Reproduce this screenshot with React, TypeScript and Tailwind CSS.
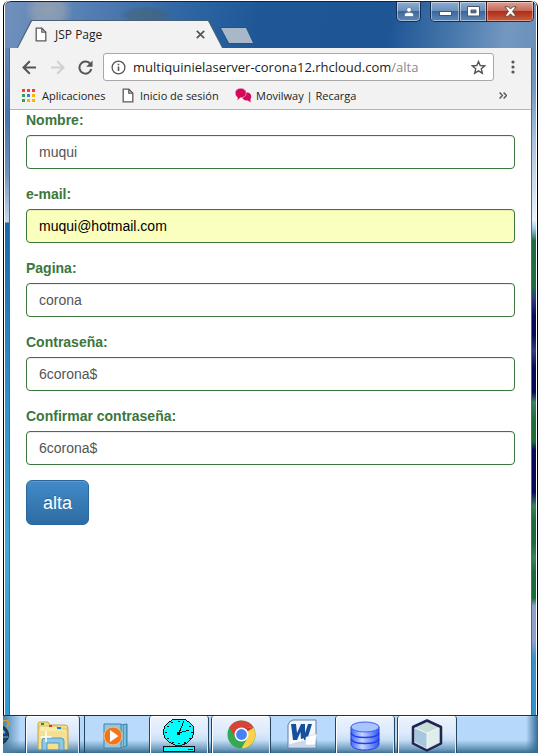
import { useState, type ReactNode } from "react";

const fields = [
  { id: "nombre", label: "Nombre:", type: "text", value: "muqui" },
  { id: "email", label: "e-mail:", type: "email", value: "muqui@hotmail.com", filled: true },
  { id: "pagina", label: "Pagina:", type: "text", value: "corona" },
  { id: "clave", label: "Contraseña:", type: "text", value: "6corona$" },
  { id: "confirmar", label: "Confirmar contraseña:", type: "text", value: "6corona$" },
];

function PageIcon() {
  return (
    <svg width="12" height="15" viewBox="0 0 12 15" fill="#fff" stroke="#5a5a5a" strokeWidth="1.3">
      <path d="M1.2 1.2H6.8L10.8 5.2V13.8H1.2Z" />
      <path d="M6.8 1.2V5.2H10.8" fill="none" />
    </svg>
  );
}

function TitleBar() {
  const glass =
    "flex items-center justify-center shadow-[inset_0_0_0_1px_rgba(255,255,255,0.45)] bg-[linear-gradient(#8fadcf_0%,#6c91bc_45%,#3a689f_50%,#5d87b6_100%)]";
  return (
    <header className="flex h-[47px] shrink-0 items-end rounded-t-md border-t border-[#1a2430] bg-[radial-gradient(ellipse_24px_24px_at_44px_8px,rgba(165,170,175,.7)_0%,rgba(165,170,175,.5)_60%,transparent_100%),radial-gradient(ellipse_28px_9px_at_141px_13px,rgba(75,100,105,.6)_0%,rgba(65,95,115,.45)_65%,transparent_100%),linear-gradient(100deg,#7191bd_0%,#5a82b5_13%,#2e65a3_34%,#1f5696_48%,#1d5595_72%,#4777ab_84%,#7398c0_94%,#6a91bc_100%)]">
      <div className="ml-3 flex h-[28px] w-[206px] bg-[#4a6078] [clip-path:polygon(0_100%,14px_0,192px_0,100%_100%)]">
        <div className="mt-px flex w-full items-center bg-[#f2f2f2] pr-[18px] pl-[18px] [clip-path:polygon(1px_100%,15px_0,191px_0,205px_100%)]">
          <PageIcon />
          <span className="ml-2 flex-1 text-[12px] leading-4 text-[#222]">JSP Page</span>
          <button aria-label="Cerrar pestaña">
            <svg width="9" height="9" viewBox="0 0 9 9" stroke="#555" strokeWidth="1.7">
              <path d="M.8.8 8.2 8.2M8.2.8.8 8.2" />
            </svg>
          </button>
        </div>
      </div>
      <button
        aria-label="Nueva pestaña"
        className="-ml-[3px] mb-1 h-[17px] w-[34px] bg-[#29517f] [clip-path:polygon(0_0,26px_0,100%_100%,8px_100%)]"
      >
        <span className="mx-px block h-[15px] bg-[#a9b8c9] [clip-path:polygon(0_0,25px_0,100%_100%,8px_100%)]" />
      </button>
      <div className="mr-0.5 ml-auto flex gap-[9px] self-start">
        <button
          aria-label="Usuario"
          className={`${glass} h-[20px] w-[25px] rounded-b-[5px] border border-t-0 border-[#152f50]`}
        >
          <svg width="10" height="10" viewBox="0 0 10 10" fill="#fff" stroke="#3c5978" strokeWidth=".5">
            <circle cx="5" cy="2.8" r="2.3" />
            <path d="M.5 9.5V7.5Q.8 5.8 3 5.6H7Q9.2 5.8 9.5 7.5V9.5Z" />
          </svg>
        </button>
        <div className="flex h-[20px] overflow-hidden rounded-b-[5px] border border-t-0 border-[#152f50]">
          <button aria-label="Minimizar" className={`${glass} w-[28px]`}>
            <svg width="13" height="6" viewBox="0 0 13 6" className="mt-1">
              <rect x=".5" y=".5" width="12" height="4" fill="#fff" stroke="#4a5560" />
            </svg>
          </button>
          <button aria-label="Restaurar" className={`${glass} w-[27px] border-l border-[#24466f]`}>
            <svg width="13" height="11" viewBox="0 0 13 11">
              <path fillRule="evenodd" d="M.5.5H12.5V10H.5ZM4 4V6.8H9V4Z" fill="#fff" stroke="#4a5560" />
            </svg>
          </button>
          <button
            aria-label="Cerrar"
            className="flex w-[47px] items-center justify-center border-l border-[#4a1a1a] bg-[linear-gradient(#dda195_0%,#c96a58_45%,#b12d19_50%,#c55f40_100%)] shadow-[inset_0_0_0_1px_rgba(255,255,255,0.4)]"
          >
            <svg width="13" height="11" viewBox="0 0 13 11">
              <path
                d="M.8.8H4.3L6.5 3 8.7.8H12.2L8.5 5.4 12.2 10.2H8.7L6.5 7.8 4.3 10.2H.8L4.5 5.4Z"
                fill="#fff"
                stroke="#554"
              />
            </svg>
          </button>
        </div>
      </div>
    </header>
  );
}

function Toolbar() {
  return (
    <nav className="flex h-[35px] items-center bg-[#f2f2f2] pt-[3px] pr-4 pl-3">
      <button aria-label="Atrás">
        <svg width="15" height="15" viewBox="0 0 15 15" fill="none" stroke="#555" strokeWidth="2">
          <path d="M14 7.5H2M7.8 1.2 1.5 7.5 7.8 13.8" />
        </svg>
      </button>
      <button aria-label="Adelante" className="ml-[13px]">
        <svg width="15" height="15" viewBox="0 0 15 15" fill="none" stroke="#d0d0d0" strokeWidth="2">
          <path d="M1 7.5H13M7.2 1.2 13.5 7.5 7.2 13.8" />
        </svg>
      </button>
      <button aria-label="Recargar" className="ml-[13px]">
        <svg width="15" height="15" viewBox="0 0 15 15" fill="none" stroke="#555" strokeWidth="2">
          <path d="M12.4 4.2A6 6 0 1 0 13.3 9" />
          <path d="M14.5.5V6.8H8.2Z" fill="#555" stroke="none" />
        </svg>
      </button>
      <div className="ml-[10px] flex h-7 flex-1 items-center rounded-[3px] border border-[#a8a8a8] bg-white pr-[7px] pl-[7px]">
        <svg width="15" height="15" viewBox="0 0 15 15" fill="none" stroke="#555" strokeWidth="1.3">
          <circle cx="7.5" cy="7.5" r="6.4" />
          <path d="M7.5 6.5V11M7.5 3.8V5.3" strokeWidth="1.6" />
        </svg>
        <div className="ml-[7px] flex-1 text-[13px] leading-5 whitespace-nowrap text-[#222]">
          multiquinielaserver-corona12.rhcloud.com<span className="text-[#888]">/alta</span>
        </div>
        <button aria-label="Añadir a marcadores">
          <svg width="15" height="15" viewBox="0 0 15 15" fill="none" stroke="#555" strokeWidth="1.4">
            <path d="M7.5 1.5 9.2 5.5 13.7 5.9 10.3 8.8 11.3 13.2 7.5 10.8 3.7 13.2 4.7 8.8 1.3 5.9 5.8 5.5Z" />
          </svg>
        </button>
      </div>
      <button aria-label="Menú" className="ml-[17px]">
        <svg width="4" height="14" viewBox="0 0 4 14" fill="#555">
          <circle cx="2" cy="2" r="1.6" />
          <circle cx="2" cy="7" r="1.6" />
          <circle cx="2" cy="12" r="1.6" />
        </svg>
      </button>
    </nav>
  );
}

function Bookmarks() {
  const dots = ["#ea4335", "#ea4335", "#ea4335", "#34a05c", "#2f80ed", "#fbb400", "#34a05c", "#fbb400", "#fbb400"];
  const item = "flex items-center text-[11px] leading-4 whitespace-nowrap text-[#222]";
  return (
    <nav className="flex h-[27px] items-center border-b border-[#b5b5b5] bg-[#f2f2f2] pr-6 pb-px pl-3">
      <a href="#aplicaciones" className={item}>
        <svg width="13" height="13" viewBox="0 0 13 13">
          {dots.map((color, i) => (
            <rect key={i} x={(i % 3) * 5} y={Math.floor(i / 3) * 5} width="3" height="3" fill={color} />
          ))}
        </svg>
        <span className="ml-[7px] w-[67px]">Aplicaciones</span>
      </a>
      <a href="#inicio" className={`${item} ml-[13px]`}>
        <PageIcon />
        <span className="ml-[6px] w-[83px]">Inicio de sesión</span>
      </a>
      <a href="#movilway" className={`${item} ml-[12px]`}>
        <svg width="17" height="15" viewBox="0 0 17 15" fill="#d5085c">
          <path d="M11 4.5C15 4 17 7 16 10C15.5 11 15.3 11.5 15.7 14.5L12.8 12.4C9 12.7 7 11 7.2 8.5Z" />
          <path
            d="M5.7.3C9 .3 11.2 2.4 11.2 5C11.2 8 8.6 9.8 5.5 9.8L2.4 12.4V9.2C.8 8.1.2 6.7.2 5C.2 2.3 2.5.3 5.7.3Z"
            stroke="#f2f2f2"
            strokeWidth=".5"
          />
        </svg>
        <span className="ml-1">Movilway | Recarga</span>
      </a>
      <button aria-label="Más marcadores" className="ml-auto">
        <svg width="8" height="7" viewBox="0 0 8 7" fill="none" stroke="#555" strokeWidth="1.4">
          <path d="M.6.6 3.4 3.5.6 6.4M4.6.6 7.4 3.5 4.6 6.4" />
        </svg>
      </button>
    </nav>
  );
}

function SignUpForm() {
  const [values, setValues] = useState(fields.map((f) => f.value));
  return (
    <form
      className="flex-1 bg-white px-4 font-['Liberation_Sans',Arial,sans-serif]"
      onSubmit={(e) => e.preventDefault()}
    >
      {fields.map((f, i) => (
        <div key={f.id} className="mb-[15px]">
          <label htmlFor={f.id} className="mb-[5px] block text-[14px] leading-5 font-bold text-[#3c763d]">
            {f.label}
          </label>
          <input
            id={f.id}
            type={f.type}
            value={values[i]}
            onChange={(e) => setValues(values.map((v, n) => (n === i ? e.target.value : v)))}
            className={`block h-[34px] w-full rounded border border-[#3c763d] px-3 text-[14px] leading-5 shadow-[inset_0_1px_1px_rgba(0,0,0,0.075)] outline-none ${
              f.filled ? "bg-[#faffbd] text-black" : "bg-white text-[#555]"
            }`}
          />
        </div>
      ))}
      <button
        type="submit"
        className="h-[45px] rounded-md border border-[#2b669a] bg-linear-to-b from-[#428bca] to-[#2d6ca2] px-4 text-[18px] leading-6 text-white shadow-[inset_0_1px_0_rgba(255,255,255,0.15)] [text-shadow:0_-1px_0_rgba(0,0,0,0.2)]"
      >
        alta
      </button>
    </form>
  );
}

function Task({ label, className, children }: { label: string; className: string; children: ReactNode }) {
  return (
    <button aria-label={label} className={`flex h-full shrink-0 items-start justify-center ${className}`}>
      {children}
    </button>
  );
}

function Taskbar() {
  const open =
    "rounded-t-[3px] border-x border-[#28455e] bg-[linear-gradient(#edf4fd_0%,#dceafb_45%,#c9dff5_65%,#6d9cbd_90%,#3d7096_100%)] shadow-[inset_1px_1px_0_#fff,inset_-1px_0_0_#dceafb]";
  const idle = "bg-[linear-gradient(#b9dafb_0%,#b9dafb_65%,#6b9cbd_87%,#356a91_100%)]";
  return (
    <footer className="ml-[3px] flex h-[38px] shrink-0 overflow-hidden border-t border-[#1c3244] bg-[linear-gradient(90deg,#4b81a8_0px,transparent_18px,transparent_calc(100%-12px),#346b93_100%),linear-gradient(#dcecff_0px,#b6d8fb_1px,#b6d8fb_65%,#6b9cbd_87%,#356a91_100%)]">
      <Task label="Internet Explorer" className="w-[22px] justify-start">
        <svg width="8" height="30" viewBox="0 0 8 30" className="mt-1">
          <circle cx="-4" cy="15" r="9.5" fill="#174466" stroke="#10283b" />
          <path d="M-4 9A6 6 0 0 1 2 13H-4ZM-4 17H5" fill="#69b5e4" stroke="#69b5e4" />
          <path d="M0 1C5-1 7 2 4 7" fill="none" stroke="#d59b2c" strokeWidth="1.5" />
        </svg>
      </Task>
      <Task label="Explorador de archivos" className={`w-[55px] ${open}`}>
        <svg width="32" height="30" viewBox="0 0 32 30" className="mt-[5px]">
          <path d="M1 28V3Q1 1 3 1H11L13 4H28Q31 4 31 7V28Z" fill="#f3dc87" stroke="#c7a64e" />
          <path d="M2 5H19L21 8H30V28H2Z" fill="#fbeaaa" stroke="#cdb160" strokeWidth=".7" />
          <path d="M2 10H30V28H2Z" fill="#f5df91" />
          <rect x="4" y="2" width="3" height="2" fill="#159d35" />
          <rect x="12" y="4" width="3" height="2" fill="#d53b20" />
          <rect x="20" y="6" width="4" height="2" fill="#1787d6" />
          <path d="M5 29V20Q5 17 8 17H24Q27 17 27 20V29H22V22H10V29Z" fill="#8dc7e5" stroke="#509bbf" />
          <path d="M9 10V21M3.5 16H14.5" stroke="#fff" strokeWidth="1.5" />
        </svg>
      </Task>
      <Task label="Reproductor multimedia" className={`ml-1 w-[65px] border-l border-[#28455e] ${idle}`}>
        <svg width="30" height="26" viewBox="0 0 30 26" className="mt-[7px]">
          <path d="M17 2 25 1V23L17 25Z" fill="#4d9fc2" stroke="#3d86aa" />
          <path d="M20 2V24M23 2V23" stroke="#b2dced" />
          <path d="M2 1H19V25H2Z" fill="#91c7df" stroke="#4185a7" />
          <circle cx="11" cy="13" r="9" fill="#f2751c" stroke="#fcbc7c" />
          <path d="M8 7 16.5 13 8 19Z" fill="#fff" />
        </svg>
      </Task>
      <Task label="Reloj" className={`w-[60px] ${open}`}>
        <svg width="34" height="34" viewBox="0 0 34 34" className="mt-[2px]" shapeRendering="crispEdges">
          <path
            d="M12 1H22L27 4 31 8 32 14 30 20 25 25 20 27H13L7 24 3 20 1 14 3 8 7 4Z"
            fill="#00ffff"
            stroke="#111"
          />
          <path d="M17 15 22 3M17 15 27 12" stroke="#111" strokeWidth="1" />
          <path
            d="M17 3v1M10 4v1M6 8v1M4 14v1M6 20v1M11 24v1M17 25v1M23 24v1M28 20v1M30 14v1M28 8v1"
            stroke="#111"
            strokeWidth="1.3"
          />
          <rect x="15" y="14" width="3" height="3" fill="#111" />
          <rect x="1.5" y="28.5" width="31" height="5" fill="#00ffff" stroke="#111" />
          <path d="M26 31H31" stroke="#111" />
        </svg>
      </Task>
      <Task label="Google Chrome" className={`ml-[2px] w-[60px] ${open}`}>
        <svg width="29" height="29" viewBox="0 0 30 30" className="mt-1">
          <circle cx="15" cy="15" r="14.5" fill="#35a852" />
          <path d="M2.5 7.6A14.5 14.5 0 0 1 27.5 8H15L9 18.5Z" fill="#d94236" />
          <path d="M27.5 8A14.5 14.5 0 0 1 15 29.5L21.3 18V8Z" fill="#fcd14b" />
          <path d="M15 8H27.5L21 12Z" fill="#c9392f" />
          <circle cx="15" cy="15" r="7.2" fill="#fff" />
          <circle cx="15" cy="15" r="5.6" fill="#4681f4" />
        </svg>
      </Task>
      <Task label="Word" className={`w-[64px] ${idle}`}>
        <svg width="30" height="30" viewBox="0 0 30 30" className="mt-[3px] mr-[3px]">
          <path d="M6 1H29V29H1V6Q2 2 6 1Z" fill="#f4f7fb" stroke="#6180a2" />
          <path d="M2 25 28 19V28H2Z" fill="#ccd9ec" />
          <path d="M4 5H9L10 14 14 5H18L18 14 21 5H25L20 21H14L13.5 13 10 21H6Z" fill="#164f9e" />
          <path d="M19 18 30 15 28 26H18Z" fill="#fff" stroke="#b7c5d8" strokeWidth=".5" />
          <path d="M3 24 17 20" stroke="#fff" strokeWidth="1.5" />
        </svg>
      </Task>
      <Task label="Base de datos" className={`w-[60px] ${open}`}>
        <svg width="30" height="30" viewBox="0 0 30 30" className="mt-[5px]">
          <defs>
            <linearGradient id="disk">
              <stop stopColor="#416bff" />
              <stop offset=".4" stopColor="#c5d7ff" />
              <stop offset="1" stopColor="#3054f5" />
            </linearGradient>
          </defs>
          <path d="M1 6V23C1 31 29 31 29 23V6Z" fill="url(#disk)" stroke="#263ee3" />
          <path d="M1 12C3 18 27 18 29 12M1 18C3 24 27 24 29 18" fill="none" stroke="#263ee3" strokeWidth="1.6" />
          <ellipse cx="15" cy="6" rx="14" ry="5" fill="#a9c5ff" stroke="#4360ed" />
        </svg>
      </Task>
      <Task label="NetBeans" className={`ml-[2px] w-[60px] ${open}`}>
        <svg width="32" height="33" viewBox="0 0 32 33" className="mt-[3px]" strokeLinejoin="round">
          <path d="M16 1.5 30 8V24.5L16 31.5 2 24.5V8Z" fill="#c7dce1" stroke="#202452" strokeWidth="2.5" />
          <path d="M4 9 16 14V29L4 23Z" fill="#a8c7df" />
          <path d="M16 14 28 9V23L16 29Z" fill="#e0eded" />
          <path d="M16 4 28 9 16 14 4 9Z" fill="#c8ddd4" />
          <path d="M16 14V29M4 9 16 14 28 9" fill="none" stroke="#f7ffff" strokeWidth=".8" />
        </svg>
      </Task>
    </footer>
  );
}

export default function App() {
  return (
    <div className="flex min-h-screen flex-col bg-white pt-px font-['Open_Sans','Noto_Sans',sans-serif]">
      <main className="ml-[3px] flex flex-1 flex-col rounded-t-md border-x border-black bg-white px-px">
        <TitleBar />
        <div className="flex flex-1">
          <div className="w-[5px] shrink-0 border-r border-[#496d8e] bg-[linear-gradient(#6185b9_0px,#4774ae_70px,#7192bd_125px,#c9d8e8_174px,#1d67a8_175px,#3292ca_350px,#43a9d7_500px,#329bd0_100%)]" />
          <div className="flex min-w-0 flex-1 flex-col">
            <Toolbar />
            <Bookmarks />
            <SignUpForm />
          </div>
          <div className="w-[5px] shrink-0 border-l border-[#526b83] bg-[linear-gradient(#6590bc_0px,#7498be_40px,#a9c4df_95px,#e9f1fb_172px,#a6cdf2_180px,#1e6945_193px,#1c7141_238px,#313e7b_250px,#09085a_268px,#09085a_287px,#343d7d_303px,#080858_320px,#080858_344px,#3b8062_354px,#1d6d3b_372px,#1d6d3b_394px,#09085a_402px,#09085a_444px,#38835e_458px,#1a6b3a_474px,#1a6b3a_494px,#3b8262_510px,#1a6b3a_524px,#1a6b3a_550px,#8aa2c8_558px,#8aa2c8_594px,#3b91c8_610px,#3392ce_100%)]" />
        </div>
      </main>
      <Taskbar />
    </div>
  );
}
